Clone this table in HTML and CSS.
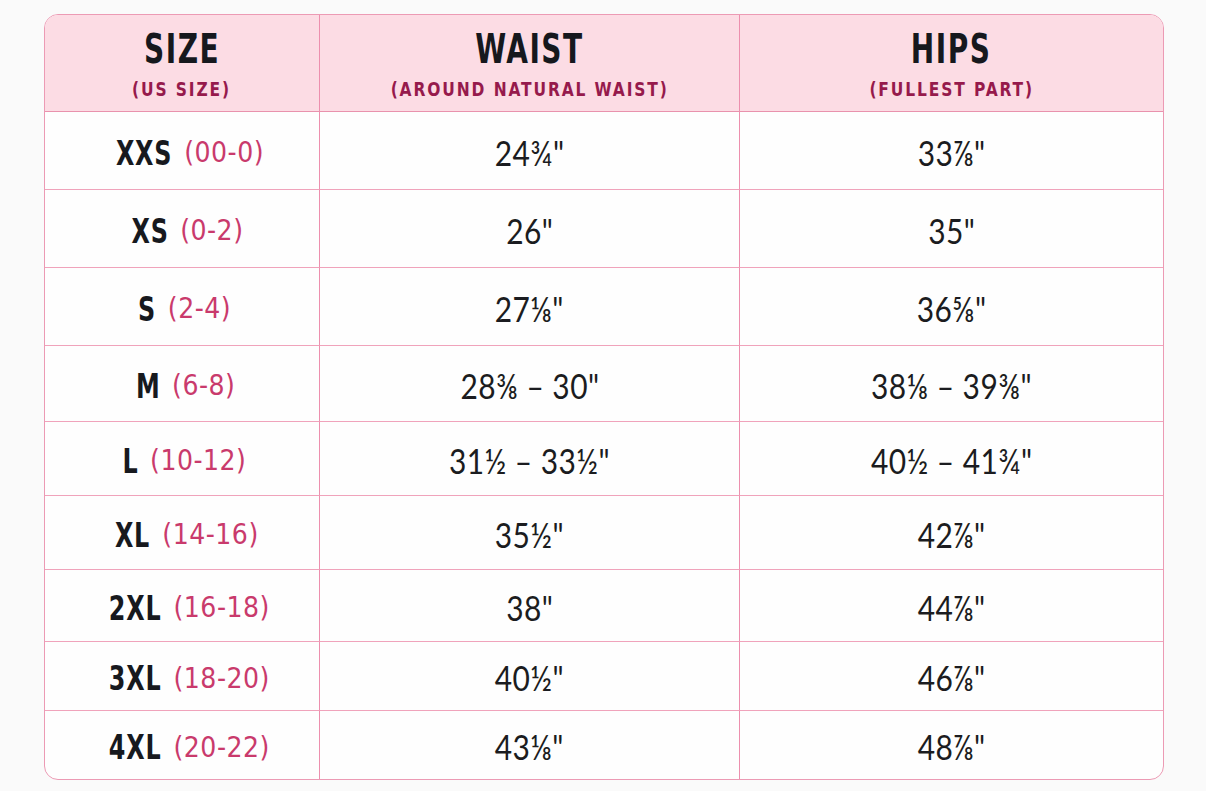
FILE: index.html
```html
<!DOCTYPE html>
<html lang="en">
<head>
<meta charset="utf-8">
<title>Size Chart</title>
<link rel="stylesheet" href="styles.css">
</head>
<body>
<div class="chart">
  <div class="cell head"><span class="h-title">SIZE</span><span class="h-sub">(US SIZE)</span></div>
  <div class="cell head"><span class="h-title">WAIST</span><span class="h-sub">(AROUND NATURAL WAIST)</span></div>
  <div class="cell head last"><span class="h-title">HIPS</span><span class="h-sub">(FULLEST PART)</span></div>

  <div class="cell size"><span class="s">XXS</span><span class="us">(00-0)</span></div>
  <div class="cell val"><span class="v">24¾"</span></div>
  <div class="cell val last"><span class="v">33⅞"</span></div>

  <div class="cell size"><span class="s">XS</span><span class="us">(0-2)</span></div>
  <div class="cell val"><span class="v">26"</span></div>
  <div class="cell val last"><span class="v">35"</span></div>

  <div class="cell size"><span class="s">S</span><span class="us">(2-4)</span></div>
  <div class="cell val"><span class="v">27⅛"</span></div>
  <div class="cell val last"><span class="v">36⅝"</span></div>

  <div class="cell size"><span class="s">M</span><span class="us">(6-8)</span></div>
  <div class="cell val"><span class="v">28⅜ – 30"</span></div>
  <div class="cell val last"><span class="v">38⅛ – 39⅜"</span></div>

  <div class="cell size"><span class="s">L</span><span class="us">(10-12)</span></div>
  <div class="cell val"><span class="v">31½ – 33½"</span></div>
  <div class="cell val last"><span class="v">40½ – 41¾"</span></div>

  <div class="cell size"><span class="s">XL</span><span class="us">(14-16)</span></div>
  <div class="cell val"><span class="v">35½"</span></div>
  <div class="cell val last"><span class="v">42⅞"</span></div>

  <div class="cell size"><span class="s">2XL</span><span class="us">(16-18)</span></div>
  <div class="cell val"><span class="v">38"</span></div>
  <div class="cell val last"><span class="v">44⅞"</span></div>

  <div class="cell size"><span class="s">3XL</span><span class="us">(18-20)</span></div>
  <div class="cell val"><span class="v">40½"</span></div>
  <div class="cell val last"><span class="v">46⅞"</span></div>

  <div class="cell size bottom"><span class="s">4XL</span><span class="us">(20-22)</span></div>
  <div class="cell val bottom"><span class="v">43⅛"</span></div>
  <div class="cell val last bottom"><span class="v">48⅞"</span></div>
</div>
</body>
</html>
```
FILE: styles.css
```css
html, body {
  margin: 0;
  padding: 0;
  background: #fafafa;
}
body {
  padding: 14px 0 0 44px;
  font-family: "DejaVu Sans Condensed", "DejaVu Sans", sans-serif;
}
.chart {
  width: 1120px;
  box-sizing: border-box;
  display: grid;
  grid-template-columns: 275px 420px 1fr;
  grid-template-rows: 97px 78px 78px 78px 76px 74px 74px 72px 69px 68px;
  border: 1px solid #ec9ab4;
  border-radius: 14px;
  overflow: hidden;
  background: #fefefe;
}
.cell {
  display: flex;
  align-items: center;
  justify-content: center;
  border-right: 1px solid #ed8fae;
  border-bottom: 1px solid #f0a3bb;
}
.cell.last { border-right: none; }
.cell.bottom { border-bottom: none; }
.head {
  background: #fcdce4;
  flex-direction: column;
  border-bottom: 1px solid #e992ad;
}
.h-title {
  display: inline-block;
  font-weight: 700;
  font-size: 41px;
  line-height: 46px;
  color: #16181d;
  letter-spacing: 2px;
  transform: scaleX(0.76);
}
.h-sub {
  display: inline-block;
  font-weight: 700;
  font-size: 20px;
  line-height: 24px;
  margin-top: 5px;
  color: #961a4c;
  letter-spacing: 2.2px;
  transform: scaleX(0.86);
}
.size { padding-top: 4px; }
.s {
  display: inline-block;
  font-weight: 700;
  font-size: 34px;
  color: #17191e;
  letter-spacing: 1px;
  transform: scaleX(0.78);
  transform-origin: right center;
}
.us {
  display: inline-block;
  font-size: 28px;
  color: #c93a6c;
  margin-left: 12px;
  letter-spacing: 0.5px;
}
.val {
  padding-top: 3px;
}
.v {
  display: inline-block;
  font-family: Lato, "DejaVu Sans", sans-serif;
  font-weight: 400;
  font-size: 34px;
  color: #1b1c20;
  letter-spacing: 0.5px;
  transform: scaleX(0.88);
}
```
